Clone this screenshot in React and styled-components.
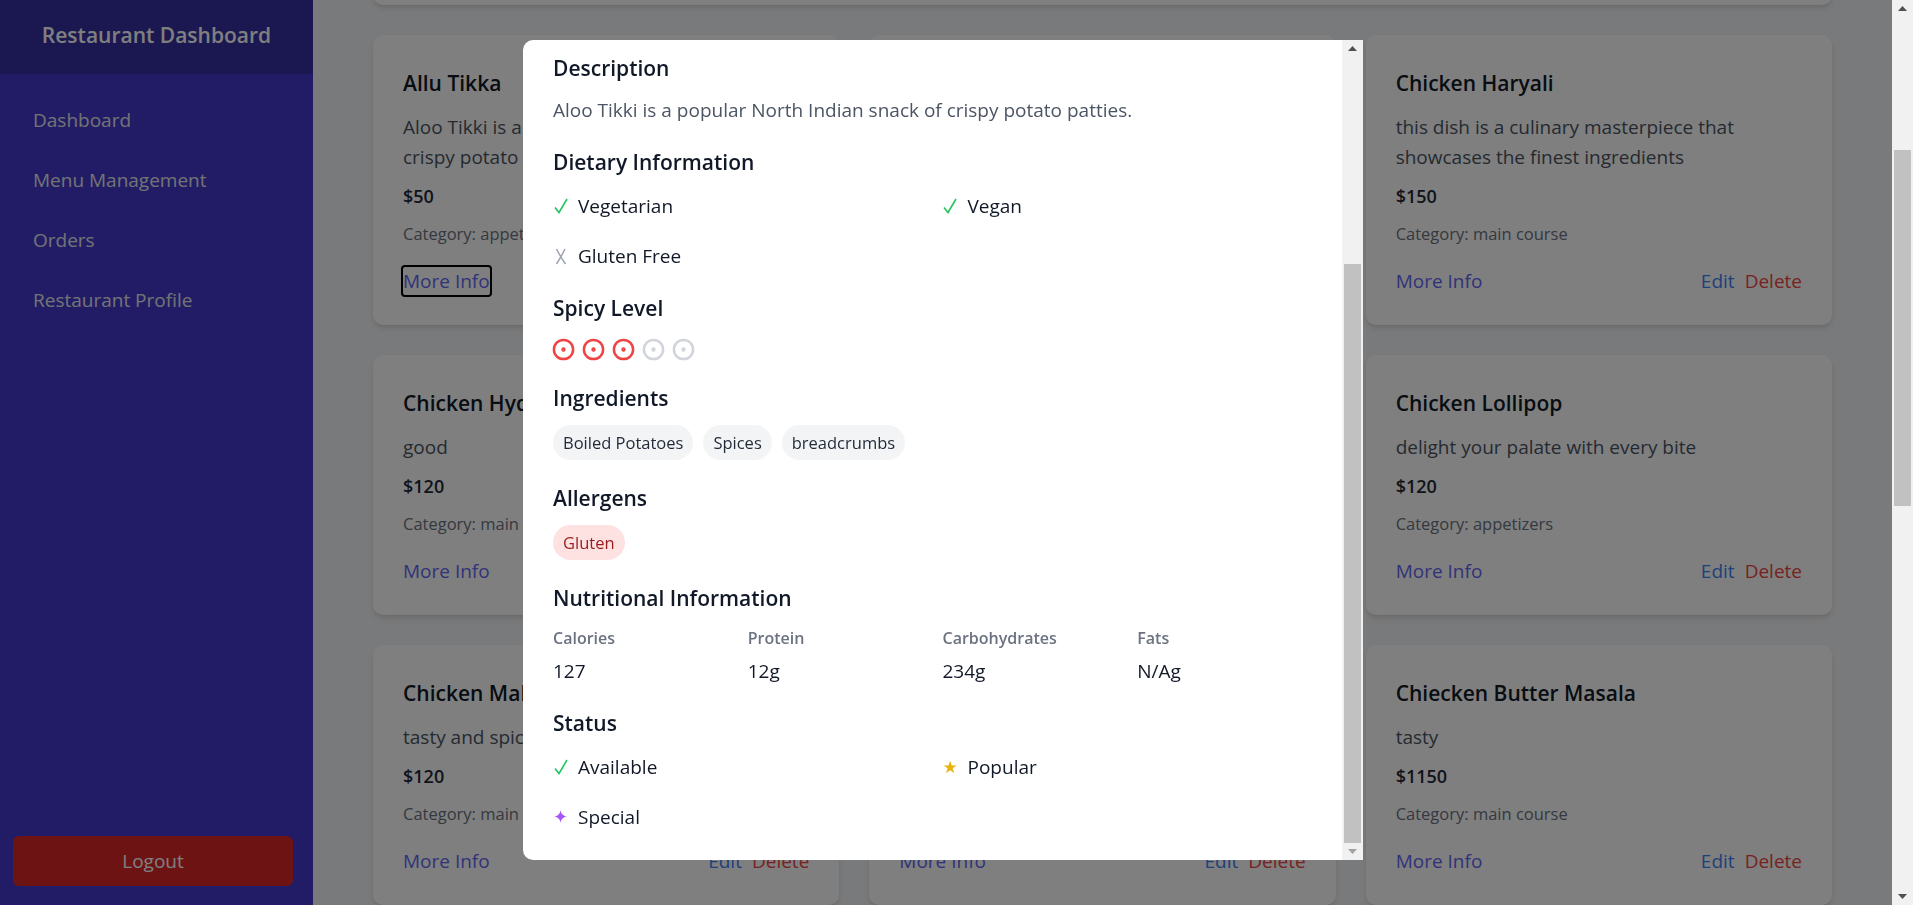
import { useLayoutEffect, useRef, useState } from "react";
import styled, { createGlobalStyle } from "styled-components";
import { CircleDot, X } from "lucide-react";

const GlobalStyle = createGlobalStyle`
  html, body {
    margin: 0;
    padding: 0;
    overflow: hidden;
  }
  body {
    font-family: "Open Sans", "Noto Sans", sans-serif;
    background-color: #f3f4f6;
    color: #111827;
  }
  * {
    box-sizing: border-box;
  }
`;

const Shell = styled.div`
  display: flex;
  height: 100vh;
`;

const Sidebar = styled.aside`
  width: 313px;
  flex-shrink: 0;
  display: flex;
  flex-direction: column;
  background-color: #4338ca;
`;

const SidebarHeader = styled.div`
  height: 74px;
  padding-bottom: 4px;
  display: flex;
  align-items: center;
  justify-content: center;
  background-color: #3730a3;
`;

const Brand = styled.h1`
  margin: 0;
  font-size: 21px;
  font-weight: 600;
  line-height: 28px;
  color: #ffffff;
`;

const Nav = styled.nav`
  display: flex;
  flex-direction: column;
  padding-top: 16px;
`;

const NavItem = styled.a`
  padding: 16px 33px;
  font-size: 19px;
  line-height: 28px;
  color: #e5e7eb;
  text-decoration: none;
  cursor: pointer;
`;

const LogoutButton = styled.button`
  margin: auto 20px 19px 13px;
  height: 50px;
  border: none;
  border-radius: 6px;
  background-color: #dc2626;
  color: #ffffff;
  font-family: inherit;
  font-size: 19px;
`;

const MainScroll = styled.main`
  position: relative;
  flex: 1;
  overflow-y: auto;
  scrollbar-width: none;
  &::-webkit-scrollbar {
    display: none;
  }
`;

const MainInner = styled.div`
  padding: 32px 60px 40px;
`;

const PageHeader = styled.div`
  display: flex;
  justify-content: space-between;
  align-items: center;
  margin-bottom: 32px;
`;

const PageTitle = styled.h2`
  margin: 0;
  font-size: 30px;
  line-height: 36px;
  font-weight: 700;
  color: #111827;
`;

const PrimaryButton = styled.button`
  padding: 10px 20px;
  border: none;
  border-radius: 6px;
  background-color: #4f46e5;
  color: #ffffff;
  font-family: inherit;
  font-size: 16px;
`;

const Panel = styled.div`
  background: #ffffff;
  border-radius: 10px;
  box-shadow: 0 4px 6px -1px rgba(0, 0, 0, 0.1), 0 2px 4px -2px rgba(0, 0, 0, 0.1);
  padding: 30px;
  margin-bottom: 30px;
`;

const PanelTitle = styled.h3`
  margin: 0 0 16px;
  font-size: 21px;
  font-weight: 600;
  line-height: 28px;
`;

const FilterRow = styled.div`
  display: grid;
  grid-template-columns: 2fr 1fr 1fr;
  gap: 20px;
`;

const Field = styled.label`
  display: flex;
  flex-direction: column;
  gap: 8px;
  font-size: 15px;
  line-height: 20px;
  color: #6b7280;
`;

const Input = styled.input`
  height: 44px;
  padding: 0 12px;
  border: 1px solid #d1d5db;
  border-radius: 6px;
  font-family: inherit;
  font-size: 16px;
`;

const TabRow = styled.div`
  display: flex;
  gap: 10px;
  margin-top: 20px;
`;

const Tab = styled.button`
  height: 40px;
  padding: 0 18px;
  border: none;
  border-radius: 999px;
  background-color: ${(p) => (p.$active ? "#4f46e5" : "#eef2ff")};
  color: ${(p) => (p.$active ? "#ffffff" : "#4338ca")};
  font-family: inherit;
  font-size: 15px;
`;

const MenuGrid = styled.div`
  display: grid;
  grid-template-columns: repeat(3, 1fr);
  gap: 30px;
`;

const Card = styled.div`
  display: flex;
  flex-direction: column;
  padding: 34px 30px 30px;
  background: #ffffff;
  border-radius: 10px;
  box-shadow: 0 4px 6px -1px rgba(0, 0, 0, 0.1), 0 2px 4px -2px rgba(0, 0, 0, 0.1);
`;

const CardTitle = styled.h3`
  margin: 0 0 15px;
  font-size: 21px;
  font-weight: 600;
  line-height: 28px;
  color: #111827;
`;

const CardDesc = styled.p`
  margin: 0 0 10px;
  font-size: 19px;
  line-height: 30px;
  color: #4b5563;
`;

const Price = styled.p`
  margin: 0 0 12px;
  font-size: 18px;
  font-weight: 600;
  line-height: 28px;
  color: #1f2937;
`;

const Category = styled.p`
  margin: 0 0 21px;
  font-size: 16.5px;
  line-height: 24px;
  color: #6b7280;
`;

const Actions = styled.div`
  margin-top: auto;
  display: flex;
  justify-content: space-between;
  align-items: center;
`;

const ActionGroup = styled.div`
  display: flex;
  gap: 10px;
`;

const TextButton = styled.button`
  padding: 0;
  border: none;
  background: none;
  font-family: inherit;
  font-size: 19px;
  line-height: 28px;
  color: ${(p) => p.$color};
  border-radius: 2px;
  outline: ${(p) => (p.$focused ? "2px solid #000000" : "none")};
  cursor: pointer;
`;

/* imitation of the classic scrollbar shown in the screenshot */
const Rail = styled.div`
  width: 21px;
  flex-shrink: 0;
  display: flex;
  flex-direction: column;
  background-color: #f1f1f1;
`;

const RailButton = styled.div`
  height: 17px;
  flex-shrink: 0;
  display: flex;
  align-items: center;
  justify-content: center;
  color: ${(p) => p.$color};
`;

const RailTrack = styled.div`
  position: relative;
  flex: 1;
`;

const RailThumb = styled.div`
  position: absolute;
  left: 2px;
  right: 2px;
  background-color: #c1c1c1;
`;

const Overlay = styled.div`
  position: fixed;
  top: 0;
  left: 0;
  bottom: 0;
  right: 21px;
  z-index: 50;
  display: flex;
  align-items: center;
  justify-content: center;
  background-color: rgba(0, 0, 0, 0.5);
`;

const Modal = styled.div`
  width: 840px;
  height: 820px;
  margin: 0 6px 5px 0;
  display: flex;
  overflow: hidden;
  background: #ffffff;
  border-radius: 10px 0 0 10px;
`;

const ModalBody = styled.div`
  flex: 1;
  overflow-y: auto;
  scrollbar-width: none;
  padding: 30px 30px 29px;
  display: flex;
  flex-direction: column;
  gap: 24px;
  &::-webkit-scrollbar {
    display: none;
  }
`;

const ModalHeader = styled.div`
  display: flex;
  justify-content: space-between;
  align-items: center;
  padding-bottom: 12px;
  border-bottom: 1px solid #e5e7eb;
`;

const ModalTitle = styled.h2`
  margin: 0;
  font-size: 28px;
  line-height: 36px;
  font-weight: 700;
`;

const CloseButton = styled.button`
  display: flex;
  padding: 4px;
  border: none;
  background: none;
  color: #6b7280;
`;

const Section = styled.section``;

const SectionTitle = styled.h3`
  margin: 0 0 ${(p) => p.$gap ?? 16}px;
  font-size: 21px;
  font-weight: 600;
  line-height: 28px;
  color: #111827;
`;

const SectionText = styled.p`
  margin: 0;
  font-size: 19px;
  line-height: 28px;
  color: #4b5563;
`;

const FlagGrid = styled.div`
  display: grid;
  grid-template-columns: repeat(2, 1fr);
  gap: 22px 20px;
`;

const Flag = styled.div`
  display: flex;
  align-items: center;
  gap: 10px;
  font-size: 19px;
  line-height: 28px;
  color: #111827;
`;

const FlagMark = styled.span`
  width: 15px;
  display: flex;
  justify-content: center;
  font-family: "DejaVu Sans", sans-serif;
  font-size: ${(p) => p.$size || 16}px;
  color: ${(p) => p.$color};
`;

const SpiceRow = styled.div`
  display: flex;
  gap: 7px;
  height: 22px;
  margin-left: -1px;
  align-items: center;
`;

const ChipRow = styled.div`
  display: flex;
  flex-wrap: wrap;
  gap: 10px;
`;

const Chip = styled.span`
  display: inline-flex;
  align-items: center;
  height: 35px;
  padding: 0 10px;
  border-radius: 999px;
  font-size: 16.5px;
  background-color: ${(p) => (p.$warn ? "#fee2e2" : "#f3f4f6")};
  color: ${(p) => (p.$warn ? "#991b1b" : "#1f2937")};
`;

const StatGrid = styled.div`
  display: grid;
  grid-template-columns: repeat(${(p) => p.$cols}, 1fr);
  gap: 22px 20px;
`;

const StatLabel = styled.div`
  margin-bottom: 9px;
  font-size: 16px;
  line-height: 20px;
  font-weight: 600;
  color: #6b7280;
`;

const StatValue = styled.div`
  font-size: 19px;
  line-height: 28px;
  color: #111827;
`;

const menuItems = [
  { name: "Allu Tikka", desc: "Aloo Tikki is a popular North Indian snack of crispy potato patties.", price: 50, category: "appetizers" },
  { name: "Paneer Tikka", desc: "Soft cubes of cottage cheese marinated and grilled", price: 180, category: "appetizers" },
  { name: "Chicken Haryali", desc: "this dish is a culinary masterpiece that showcases the finest ingredients", price: 150, category: "main course" },
  { name: "Chicken Hyderabadi", desc: "good", price: 120, category: "main course" },
  { name: "Veg Biryani", desc: "aromatic rice with vegetables", price: 140, category: "main course" },
  { name: "Chicken Lollipop", desc: "delight your palate with every bite", price: 120, category: "appetizers" },
  { name: "Chicken Malai Tikka", desc: "tasty and spicy", price: 120, category: "main course" },
  { name: "Butter Naan", desc: "soft and buttery", price: 30, category: "breads" },
  { name: "Chiecken Butter Masala", desc: "tasty", price: 1150, category: "main course" },
  { name: "Dal Makhani", desc: "slow cooked black lentils with fresh butter and cream", price: 160, category: "main course" },
  { name: "Gulab Jamun", desc: "sweet and soft", price: 60, category: "desserts" },
  { name: "Masala Dosa", desc: "crispy dosa with potato filling", price: 90, category: "main course" },
  { name: "Veg Manchurian", desc: "spicy indo chinese balls", price: 110, category: "appetizers" },
  { name: "Mango Lassi", desc: "refreshing yogurt drink", price: 70, category: "beverages" },
  { name: "Fish Fry", desc: "crispy fried fish", price: 220, category: "main course" },
  { name: "Rasmalai", desc: "soft paneer discs soaked in sweet saffron flavoured milk", price: 80, category: "desserts" },
  { name: "Jeera Rice", desc: "basmati rice with cumin", price: 100, category: "main course" },
  { name: "Masala Chai", desc: "spiced indian tea", price: 25, category: "beverages" },
];

const nutrition = [
  { label: "Calories", value: "127" },
  { label: "Protein", value: "12g" },
  { label: "Carbohydrates", value: "234g" },
  { label: "Fats", value: "N/Ag" },
];

const CheckMark = () => (
  <svg width="14" height="16" viewBox="0 0 14 16">
    <polyline points="1,9.5 5,14.5 13,1" fill="none" stroke="#22c55e" strokeWidth="1.6" />
  </svg>
);

const CrossMark = () => (
  <svg width="14" height="17" viewBox="0 0 14 17">
    <path d="M2.5 1 Q6 8 11.5 16 M11 1 Q7 9 2.5 16" fill="none" stroke="#9ca3af" strokeWidth="1.5" />
  </svg>
);

const Arrow = ({ down }) => (
  <svg width="9" height="5" viewBox="0 0 9 5">
    <polygon points={down ? "0,0 9,0 4.5,5" : "4.5,0 9,5 0,5"} fill="currentColor" />
  </svg>
);

const ScrollRail = ({ bar, upColor, downColor }) => (
  <Rail>
    <RailButton $color={upColor}>
      <Arrow />
    </RailButton>
    <RailTrack>
      {bar && <RailThumb style={{ top: `${bar.top * 100}%`, height: `${bar.size * 100}%` }} />}
    </RailTrack>
    <RailButton $color={downColor}>
      <Arrow down />
    </RailButton>
  </Rail>
);

const MenuCard = ({ item, focused }) => (
  <Card>
    <CardTitle>{item.name}</CardTitle>
    <CardDesc>{item.desc}</CardDesc>
    <Price>${item.price}</Price>
    <Category>Category: {item.category}</Category>
    <Actions>
      <TextButton $color="#6366f1" $focused={focused}>
        More Info
      </TextButton>
      <ActionGroup>
        <TextButton $color="#3b82f6">Edit</TextButton>
        <TextButton $color="#ef4444">Delete</TextButton>
      </ActionGroup>
    </Actions>
  </Card>
);

const measure = (el) => ({
  top: el.scrollTop / el.scrollHeight,
  size: el.clientHeight / el.scrollHeight,
});

const App = () => {
  const mainRef = useRef(null);
  const gridRef = useRef(null);
  const bodyRef = useRef(null);
  const [pageBar, setPageBar] = useState(null);
  const [modalBar, setModalBar] = useState(null);

  useLayoutEffect(() => {
    const main = mainRef.current;
    main.scrollTop = gridRef.current.offsetTop - 35;
    const body = bodyRef.current;
    body.scrollTop = body.scrollHeight;
    setPageBar(measure(main));
    setModalBar(measure(body));
  }, []);

  return (
    <>
      <GlobalStyle />
      <Shell>
        <Sidebar>
          <SidebarHeader>
            <Brand>Restaurant Dashboard</Brand>
          </SidebarHeader>
          <Nav>
            <NavItem>Dashboard</NavItem>
            <NavItem>Menu Management</NavItem>
            <NavItem>Orders</NavItem>
            <NavItem>Restaurant Profile</NavItem>
          </Nav>
          <LogoutButton>Logout</LogoutButton>
        </Sidebar>

        <MainScroll ref={mainRef}>
          <MainInner>
            <PageHeader>
              <PageTitle>Menu Management</PageTitle>
              <PrimaryButton>Add New Item</PrimaryButton>
            </PageHeader>
            <Panel>
              <PanelTitle>Filter Menu Items</PanelTitle>
              <FilterRow>
                <Field>
                  Search
                  <Input placeholder="Search by name" />
                </Field>
                <Field>
                  Category
                  <Input placeholder="All categories" />
                </Field>
                <Field>
                  Sort by
                  <Input placeholder="Name" />
                </Field>
              </FilterRow>
              <TabRow>
                <Tab $active>All</Tab>
                <Tab>Appetizers</Tab>
                <Tab>Main Course</Tab>
                <Tab>Breads</Tab>
                <Tab>Desserts</Tab>
                <Tab>Beverages</Tab>
              </TabRow>
            </Panel>
            <MenuGrid ref={gridRef}>
              {menuItems.map((item, i) => (
                <MenuCard key={item.name} item={item} focused={i === 0} />
              ))}
            </MenuGrid>
          </MainInner>
        </MainScroll>

        <ScrollRail bar={pageBar} upColor="#505050" downColor="#505050" />
      </Shell>

      <Overlay>
        <Modal>
          <ModalBody ref={bodyRef}>
            <ModalHeader>
              <ModalTitle>Allu Tikka</ModalTitle>
              <CloseButton>
                <X size={24} />
              </CloseButton>
            </ModalHeader>

            <Section>
              <SectionTitle>Basic Information</SectionTitle>
              <StatGrid $cols={2}>
                <div>
                  <StatLabel>Price</StatLabel>
                  <StatValue>$50</StatValue>
                </div>
                <div>
                  <StatLabel>Category</StatLabel>
                  <StatValue>appetizers</StatValue>
                </div>
                <div>
                  <StatLabel>Preparation Time</StatLabel>
                  <StatValue>15 mins</StatValue>
                </div>
                <div>
                  <StatLabel>Serving Size</StatLabel>
                  <StatValue>2 pieces</StatValue>
                </div>
              </StatGrid>
            </Section>

            <Section>
              <SectionTitle $gap={14}>Description</SectionTitle>
              <SectionText>Aloo Tikki is a popular North Indian snack of crispy potato patties.</SectionText>
            </Section>

            <Section>
              <SectionTitle>Dietary Information</SectionTitle>
              <FlagGrid>
                <Flag>
                  <FlagMark>
                    <CheckMark />
                  </FlagMark>
                  Vegetarian
                </Flag>
                <Flag>
                  <FlagMark>
                    <CheckMark />
                  </FlagMark>
                  Vegan
                </Flag>
                <Flag>
                  <FlagMark>
                    <CrossMark />
                  </FlagMark>
                  Gluten Free
                </Flag>
              </FlagGrid>
            </Section>

            <Section>
              <SectionTitle>Spicy Level</SectionTitle>
              <SpiceRow>
                {[1, 2, 3, 4, 5].map((n) => (
                  <CircleDot key={n} size={23} strokeWidth={2.6} color={n <= 3 ? "#ef4444" : "#d1d5db"} />
                ))}
              </SpiceRow>
            </Section>

            <Section>
              <SectionTitle $gap={13}>Ingredients</SectionTitle>
              <ChipRow>
                <Chip>Boiled Potatoes</Chip>
                <Chip>Spices</Chip>
                <Chip>breadcrumbs</Chip>
              </ChipRow>
            </Section>

            <Section>
              <SectionTitle $gap={13}>Allergens</SectionTitle>
              <ChipRow>
                <Chip $warn>Gluten</Chip>
              </ChipRow>
            </Section>

            <Section>
              <SectionTitle>Nutritional Information</SectionTitle>
              <StatGrid $cols={4}>
                {nutrition.map((n) => (
                  <div key={n.label}>
                    <StatLabel>{n.label}</StatLabel>
                    <StatValue>{n.value}</StatValue>
                  </div>
                ))}
              </StatGrid>
            </Section>

            <Section>
              <SectionTitle>Status</SectionTitle>
              <FlagGrid>
                <Flag>
                  <FlagMark>
                    <CheckMark />
                  </FlagMark>
                  Available
                </Flag>
                <Flag>
                  <FlagMark $color="#eab308" $size={17}>
                    ★
                  </FlagMark>
                  Popular
                </Flag>
                <Flag>
                  <FlagMark $color="#a855f7" $size={18}>
                    ✦
                  </FlagMark>
                  Special
                </Flag>
              </FlagGrid>
            </Section>
          </ModalBody>
          <ScrollRail bar={modalBar} upColor="#505050" downColor="#a3a3a3" />
        </Modal>
      </Overlay>
    </>
  );
};

export default App;
